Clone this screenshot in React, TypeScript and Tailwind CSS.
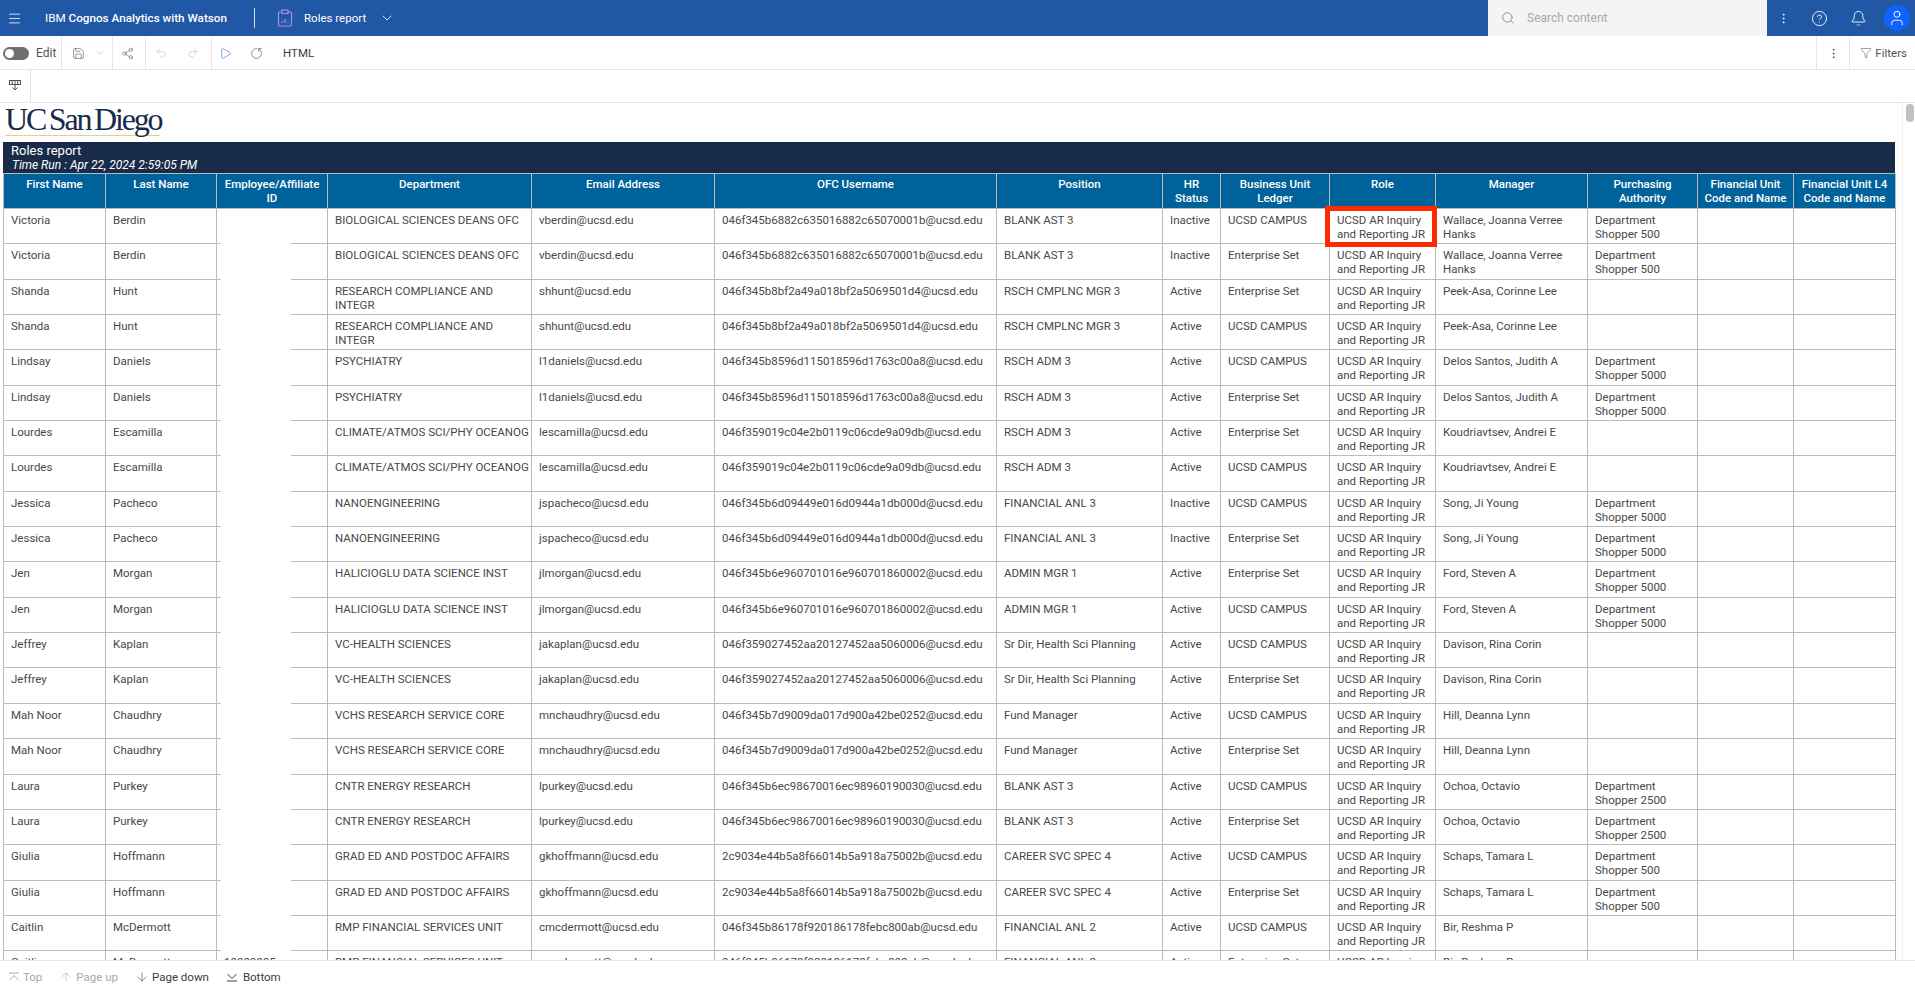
import React from 'react';
import {
  ArrowDown,
  ArrowUp,
  Bell,
  ChevronDown,
  CircleHelp,
  EllipsisVertical,
  Funnel,
  Menu,
  Play,
  Redo2,
  RotateCw,
  Save,
  Search,
  Share2,
  Undo2,
  User,
} from 'lucide-react';

const columns = [
  { label: 'First Name', width: 102 },
  { label: 'Last Name', width: 111 },
  { label: 'Employee/Affiliate ID', width: 111 },
  { label: 'Department', width: 204 },
  { label: 'Email Address', width: 183 },
  { label: 'OFC Username', width: 282 },
  { label: 'Position', width: 166 },
  { label: 'HR Status', width: 58 },
  { label: 'Business Unit Ledger', width: 109 },
  { label: 'Role', width: 106 },
  { label: 'Manager', width: 152 },
  { label: 'Purchasing Authority', width: 110 },
  { label: 'Financial Unit Code and Name', width: 96 },
  { label: 'Financial Unit L4 Code and Name', width: 102 },
];

const CAMPUS = 'UCSD CAMPUS';
const ENTERPRISE = 'Enterprise Set';

// every person shows up twice, once per ledger
const people = [
  { first: 'Victoria', last: 'Berdin', dept: 'BIOLOGICAL SCIENCES DEANS OFC', email: 'vberdin', ofc: '046f345b6882c635016882c65070001b', position: 'BLANK AST 3', status: 'Inactive', ledgers: [CAMPUS, ENTERPRISE], manager: 'Wallace, Joanna Verree Hanks', shopper: '500' },
  { first: 'Shanda', last: 'Hunt', dept: 'RESEARCH COMPLIANCE AND\nINTEGR', email: 'shhunt', ofc: '046f345b8bf2a49a018bf2a5069501d4', position: 'RSCH CMPLNC MGR 3', status: 'Active', ledgers: [ENTERPRISE, CAMPUS], manager: 'Peek-Asa, Corinne Lee', shopper: '' },
  { first: 'Lindsay', last: 'Daniels', dept: 'PSYCHIATRY', email: 'l1daniels', ofc: '046f345b8596d115018596d1763c00a8', position: 'RSCH ADM 3', status: 'Active', ledgers: [CAMPUS, ENTERPRISE], manager: 'Delos Santos, Judith A', shopper: '5000' },
  { first: 'Lourdes', last: 'Escamilla', dept: 'CLIMATE/ATMOS SCI/PHY OCEANOG', email: 'lescamilla', ofc: '046f359019c04e2b0119c06cde9a09db', position: 'RSCH ADM 3', status: 'Active', ledgers: [ENTERPRISE, CAMPUS], manager: 'Koudriavtsev, Andrei E', shopper: '' },
  { first: 'Jessica', last: 'Pacheco', dept: 'NANOENGINEERING', email: 'jspacheco', ofc: '046f345b6d09449e016d0944a1db000d', position: 'FINANCIAL ANL 3', status: 'Inactive', ledgers: [CAMPUS, ENTERPRISE], manager: 'Song, Ji Young', shopper: '5000' },
  { first: 'Jen', last: 'Morgan', dept: 'HALICIOGLU DATA SCIENCE INST', email: 'jlmorgan', ofc: '046f345b6e960701016e960701860002', position: 'ADMIN MGR 1', status: 'Active', ledgers: [ENTERPRISE, CAMPUS], manager: 'Ford, Steven A', shopper: '5000' },
  { first: 'Jeffrey', last: 'Kaplan', dept: 'VC-HEALTH SCIENCES', email: 'jakaplan', ofc: '046f359027452aa20127452aa5060006', position: 'Sr Dir, Health Sci Planning', status: 'Active', ledgers: [CAMPUS, ENTERPRISE], manager: 'Davison, Rina Corin', shopper: '' },
  { first: 'Mah Noor', last: 'Chaudhry', dept: 'VCHS RESEARCH SERVICE CORE', email: 'mnchaudhry', ofc: '046f345b7d9009da017d900a42be0252', position: 'Fund Manager', status: 'Active', ledgers: [CAMPUS, ENTERPRISE], manager: 'Hill, Deanna Lynn', shopper: '' },
  { first: 'Laura', last: 'Purkey', dept: 'CNTR ENERGY RESEARCH', email: 'lpurkey', ofc: '046f345b6ec98670016ec98960190030', position: 'BLANK AST 3', status: 'Active', ledgers: [CAMPUS, ENTERPRISE], manager: 'Ochoa, Octavio', shopper: '2500' },
  { first: 'Giulia', last: 'Hoffmann', dept: 'GRAD ED AND POSTDOC AFFAIRS', email: 'gkhoffmann', ofc: '2c9034e44b5a8f66014b5a918a75002b', position: 'CAREER SVC SPEC 4', status: 'Active', ledgers: [CAMPUS, ENTERPRISE], manager: 'Schaps, Tamara L', shopper: '500' },
  { first: 'Caitlin', last: 'McDermott', dept: 'RMP FINANCIAL SERVICES UNIT', email: 'cmcdermott', ofc: '046f345b86178f920186178febc800ab', position: 'FINANCIAL ANL 2', status: 'Active', ledgers: [CAMPUS, ENTERPRISE], manager: 'Bir, Reshma P', shopper: '' },
];

const rows = people.flatMap((p) => p.ledgers.map((ledger) => ({ ...p, ledger })));

const Cell: React.FC<{ children?: React.ReactNode; className?: string }> = ({ children, className = '' }) => (
  <td className={`border border-[#bbbbbb] px-[7px] pt-[4px] pb-0 align-top ${className}`}>{children}</td>
);

const ToolSep = () => <div className="h-full w-px bg-[#e6e6e6]" />;

const ClipboardIcon = () => (
  <svg width="16" height="18" viewBox="0 0 16 18" fill="none" stroke="#a78bfa" strokeWidth="1.2">
    <rect x="1.5" y="3" width="13" height="14" rx="1" />
    <rect x="5" y="1" width="6" height="3.5" fill="#2058a5" />
    <path d="M5 14v-2M8 14v-4M11 14v-1" />
  </svg>
);

const MoveDownIcon = () => (
  <svg width="14" height="14" viewBox="0 0 14 14" fill="none" stroke="#525252" strokeWidth="1">
    <rect x="1.5" y="1.5" width="11" height="4" />
    <path d="M4.2 1.5v4M7 1.5v9M9.8 1.5v4M4.5 8.5 7 11l2.5-2.5" />
  </svg>
);

const EdgeArrowIcon = ({ up, color }: { up: boolean; color: string }) => (
  <svg width="12" height="12" viewBox="0 0 12 12" fill="none" stroke={color} strokeWidth="1">
    {up ? <path d="M1 2h10M1.5 9 6 4.5 10.5 9" /> : <path d="M1 10h10M1.5 3 6 7.5 10.5 3" />}
  </svg>
);

export default function App() {
  return (
    <div className="flex h-[992px] w-[1915px] flex-col overflow-hidden bg-white font-['Roboto',sans-serif] text-[11.5px] leading-[14px] text-[#484848]">
      {/* Top bar */}
      <header className="flex h-9 shrink-0 items-center whitespace-nowrap bg-[#2058a5] text-white">
        <Menu size={15} strokeWidth={1.25} className="ml-[7px]" />
        <div className="ml-[23px] w-[187px] text-[11.7px]">
          IBM <span className="font-medium">Cognos Analytics with Watson</span>
        </div>
        <div className="ml-[22px] h-[20px] w-px bg-white/80" />
        <div className="ml-[22px] flex items-center">
          <ClipboardIcon />
        </div>
        <span className="ml-[11px] w-[62px] text-[11.5px]">Roles report</span>
        <ChevronDown size={16} strokeWidth={1.25} className="ml-[13px]" />
        <div className="ml-auto flex h-full w-[279px] items-center bg-[#f4f4f4] pl-[13px] text-[12px] text-[#a8a8a8]">
          <Search size={14} strokeWidth={1.25} className="text-[#6f6f6f]" />
          <span className="ml-[12px]">Search content</span>
        </div>
        <EllipsisVertical size={13} strokeWidth={1.5} className="ml-[10px]" />
        <CircleHelp size={17} strokeWidth={1.25} className="ml-[21px]" />
        <Bell size={17} strokeWidth={1.25} className="ml-[22px]" />
        <div className="ml-[17px] mr-[5px] flex h-[26px] w-[26px] items-center justify-center rounded-full bg-[#0f62fe]">
          <User size={18} strokeWidth={1.25} />
        </div>
      </header>

      {/* Report toolbar */}
      <div className="flex h-[34px] shrink-0 items-center border-b border-[#e6e6e6] pt-px text-[#525252]">
        <div className="ml-[3px] flex h-[13px] w-[26px] items-center rounded-full bg-[#6f6f6f] pl-[2px]">
          <div className="h-[9px] w-[9px] rounded-full bg-white" />
        </div>
        <span className="ml-[7px] w-[23px] text-[12px]">Edit</span>
        <div className="ml-[2px] h-full">
          <ToolSep />
        </div>
        <Save size={13} strokeWidth={1.1} className="ml-[10px]" />
        <ChevronDown size={10} strokeWidth={1.1} className="ml-[10px] text-[#8d8d8d]" />
        <div className="ml-[7px] h-full">
          <ToolSep />
        </div>
        <Share2 size={13} strokeWidth={1.1} className="ml-[8px]" />
        <div className="ml-[11px] h-full">
          <ToolSep />
        </div>
        <Undo2 size={12} strokeWidth={1.1} className="ml-[9px] text-[#b5b5b5]" />
        <Redo2 size={12} strokeWidth={1.1} className="ml-[20px] text-[#b5b5b5]" />
        <div className="ml-[12px] h-full">
          <ToolSep />
        </div>
        <Play size={13} strokeWidth={1.1} className="ml-[7px] text-[#2f6fd0]" />
        <RotateCw size={13} strokeWidth={1.2} className="ml-[18px] scale-x-[-1] rotate-90" />
        <span className="ml-[20px] text-[11.5px] text-[#3d3d3d]">HTML</span>
        <div className="ml-auto h-full">
          <ToolSep />
        </div>
        <EllipsisVertical size={13} strokeWidth={1.5} className="ml-[10px]" />
        <div className="ml-[9px] h-full">
          <ToolSep />
        </div>
        <Funnel size={12} strokeWidth={1.1} className="ml-[10px]" />
        <span className="ml-[3px] mr-[8px] text-[11.5px]">Filters</span>
      </div>

      {/* Secondary toolbar */}
      <div className="flex h-[33px] shrink-0 items-center border-b border-[#e6e6e6]">
        <div className="flex w-[31px] items-center justify-center self-stretch border-r border-[#e6e6e6]">
          <MoveDownIcon />
        </div>
      </div>

      {/* Report viewport */}
      <div className="flex min-h-0 flex-1">
        <main className="relative min-w-0 flex-1 overflow-hidden pl-[3px]">
          <div className="ml-[2px] h-[39px] w-[160px] pt-[2px]">
            <div className="whitespace-nowrap font-['Liberation_Serif',serif] text-[32px] leading-[28px] tracking-[-2.2px] [word-spacing:-2px] text-[#182b49]">
              UC San Diego
            </div>
            <div className="mt-[2px] h-px w-[155px] bg-[#e3cf97]" />
          </div>

          <div className="h-[31px] w-[1892px] bg-[#182b49] pl-[8px] pt-[1px] text-white">
            <div className="text-[13px] leading-[16px]">Roles report</div>
            <div className="pl-px text-[12px] italic leading-[13px]">Time Run : Apr 22, 2024 2:59:05 PM</div>
          </div>

          <table className="w-[1892px] table-fixed border-collapse">
            <colgroup>
              {columns.map((c) => (
                <col key={c.label} style={{ width: c.width }} />
              ))}
            </colgroup>
            <thead>
              <tr className="h-[35px] bg-[#00629b] text-center text-white">
                {columns.map((c) => (
                  <th key={c.label} className="border border-[#bbbbbb] px-[6px] pt-[3px] align-top font-medium">
                    {c.label}
                  </th>
                ))}
              </tr>
            </thead>
            <tbody>
              {rows.map((r, i) => (
                <tr key={i} className="h-[35.35px]">
                  <Cell>{r.first}</Cell>
                  <Cell>{r.last}</Cell>
                  <Cell>{i === rows.length - 1 ? '10000005' : ''}</Cell>
                  <Cell className="whitespace-pre">{r.dept}</Cell>
                  <Cell>{r.email}@ucsd.edu</Cell>
                  <Cell>{r.ofc}@ucsd.edu</Cell>
                  <Cell>{r.position}</Cell>
                  <Cell>{r.status}</Cell>
                  <Cell>{r.ledger}</Cell>
                  <Cell className="relative">
                    UCSD AR Inquiry and Reporting JR
                    {i === 0 && (
                      <div className="absolute -left-[5px] -top-[3px] h-[41px] w-[112px] border-[5px] border-[#ff2a00]" />
                    )}
                  </Cell>
                  <Cell>{r.manager}</Cell>
                  <Cell>{r.shopper ? `Department Shopper ${r.shopper}` : ''}</Cell>
                  <Cell />
                  <Cell />
                </tr>
              ))}
            </tbody>
          </table>

          {/* Employee IDs are blanked out in the source */}
          <div className="absolute left-[221px] top-[106px] h-[749px] w-[70px] bg-white" />
        </main>

        <div className="w-[13px] shrink-0 border-l border-[#eeeeee] pl-[3px] pt-[1px]">
          <div className="h-[18px] w-[8px] rounded-full bg-[#c1c1c1]" />
        </div>
      </div>

      {/* Paging footer */}
      <footer className="flex h-[32px] shrink-0 items-center border-t border-[#e6e6e6] bg-white pl-[8px] text-[11.5px] text-[#3d3d3d]">
        <EdgeArrowIcon up color="#a8a8a8" />
        <span className="ml-[3px] text-[#a8a8a8]">Top</span>
        <ArrowUp size={14} strokeWidth={1} className="ml-[17px] text-[#a8a8a8]" />
        <span className="ml-[3px] text-[#a8a8a8]">Page up</span>
        <ArrowDown size={14} strokeWidth={1} className="ml-[17px]" />
        <span className="ml-[3px]">Page down</span>
        <span className="ml-[17px]">
          <EdgeArrowIcon up={false} color="#3d3d3d" />
        </span>
        <span className="ml-[5px]">Bottom</span>
      </footer>
    </div>
  );
}
